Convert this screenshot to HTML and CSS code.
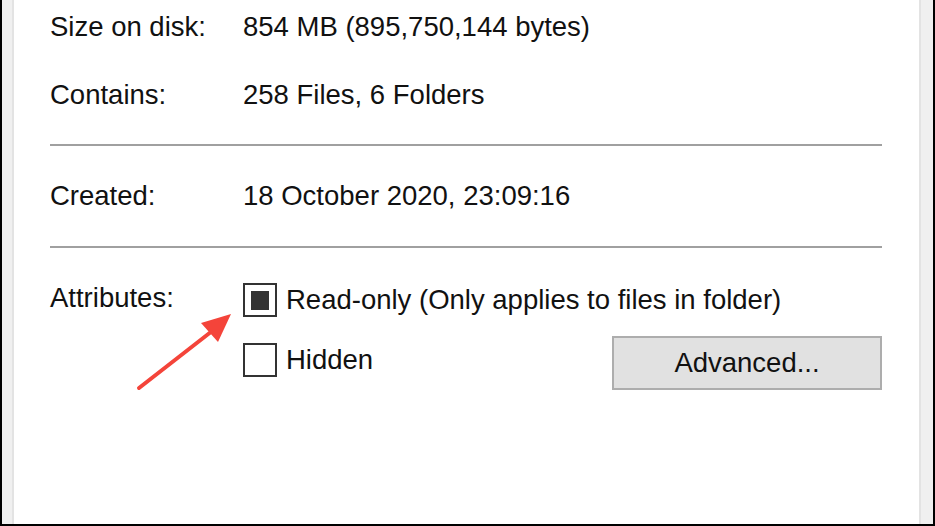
FILE: index.html
```html
<!DOCTYPE html>
<html lang="en">
<head>
    <meta charset="UTF-8">
    <title>Folder Properties</title>
    <link rel="stylesheet" href="styles.css">
</head>
<body>

<div class="window">
    <div class="edge edge-left"></div>

    <div class="content">
        <!-- General info -->
        <div class="row row-size">
            <span class="label">Size on disk:</span>
            <span class="value">854 MB (895,750,144 bytes)</span>
        </div>
        <div class="row row-contains">
            <span class="label">Contains:</span>
            <span class="value">258 Files, 6 Folders</span>
        </div>

        <hr class="separator">

        <div class="row row-created">
            <span class="label">Created:</span>
            <span class="value">18 October 2020, 23:09:16</span>
        </div>

        <hr class="separator">

        <!-- Attributes -->
        <div class="attributes">
            <span class="label">Attributes:</span>
            <div class="attr-options">
                <label class="check">
                    <span class="box box-partial"></span>
                    Read-only (Only applies to files in folder)
                </label>
                <div class="attr-second">
                    <label class="check">
                        <span class="box"></span>
                        Hidden
                    </label>
                    <button class="button">Advanced...</button>
                </div>
            </div>
        </div>

        <!-- Annotation arrow -->
        <svg class="arrow" width="260" height="420" viewBox="0 0 260 420">
            <line x1="137" y1="388" x2="214" y2="328" stroke="#f4443a" stroke-width="4" stroke-linecap="round"/>
            <polygon points="229,314 199,323 216,342" fill="#f4443a"/>
        </svg>
    </div>

    <div class="edge edge-right"></div>
</div>

</body>
</html>
```

FILE: styles.css
```css
/* Fenster-Rahmen */
body {
    margin: 0;
    background-color: #000;
    font-family: "Liberation Sans", Arial, sans-serif;
    color: #111;
}

.window {
    display: flex;
    height: 524px;
    margin: 0 2px;
    border-bottom: 2px solid #000;
    background-color: #fff;
}

.edge {
    background-color: #f0f0f0;
}

.edge-left {
    width: 10px;
    border-right: 2px solid #e3e3e3;
}

.edge-right {
    width: 12px;
    border-left: 2px solid #e3e3e3;
}

.content {
    flex: 1;
    position: relative;
    padding: 0 37px 0 36px;
}

/* Zeilen */
.row {
    display: flex;
    align-items: center;
    font-size: 27.5px;
}

.row-size {
    height: 54px;
}

.row-contains {
    height: 82px;
}

.row-created {
    height: 100px;
}

.label {
    width: 193px;
    flex-shrink: 0;
    font-size: 27.5px;
}

.separator {
    border: none;
    height: 2px;
    background-color: #a0a0a0;
    margin: 8px 0 0 0;
}

.row-created + .separator {
    margin-top: 0;
}

/* Attribute */
.attributes {
    display: flex;
    padding-top: 35px;
}

.attributes .label {
    line-height: 34px;
    margin-top: -2px;
}

.attr-options {
    flex: 1;
    display: flex;
    flex-direction: column;
    gap: 19px;
}

.attr-second {
    display: flex;
    justify-content: space-between;
    align-items: flex-start;
}

.attr-second .check {
    margin-top: 7px;
}

.check {
    display: flex;
    align-items: center;
    gap: 9px;
    font-size: 27.5px;
    height: 34px;
}

.box {
    box-sizing: border-box;
    width: 34px;
    height: 34px;
    border: 2px solid #333;
    background-color: #fff;
    display: flex;
    justify-content: center;
    align-items: center;
}

.box-partial::after {
    content: "";
    width: 18px;
    height: 19px;
    background-color: #333;
}

.button {
    width: 270px;
    height: 54px;
    background-color: #e1e1e1;
    border: 2px solid #adadad;
    font-family: "Liberation Sans", Arial, sans-serif;
    font-size: 27.5px;
    color: #111;
    padding: 0;
}

.arrow {
    position: absolute;
    left: -12px;
    top: 0;
    pointer-events: none;
}
```
